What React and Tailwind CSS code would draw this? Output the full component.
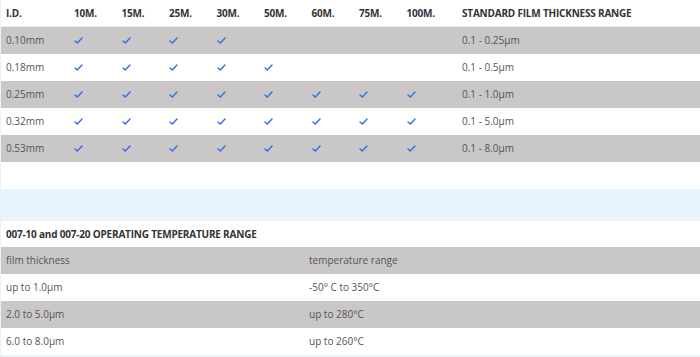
import React from 'react';

const lengths = ['10M.', '15M.', '25M.', '30M.', '50M.', '60M.', '75M.', '100M.'];

const rows = [
  { id: '0.10mm', count: 4, range: '0.1 - 0.25μm' },
  { id: '0.18mm', count: 5, range: '0.1 - 0.5μm' },
  { id: '0.25mm', count: 8, range: '0.1 - 1.0μm' },
  { id: '0.32mm', count: 8, range: '0.1 - 5.0μm' },
  { id: '0.53mm', count: 8, range: '0.1 - 8.0μm' },
];

const temps = [
  ['up to 1.0μm', '-50° C to 350°C'],
  ['2.0 to 5.0μm', 'up to 280°C'],
  ['6.0 to 8.0μm', 'up to 260°C'],
];

const Check = () => (
  <svg width="9" height="7" viewBox="0 0 9 7" className="block">
    <path d="M1 4 L3.3 6 L8 1" fill="none" stroke="#2f6fe8" strokeWidth="1.4" strokeLinecap="round" strokeLinejoin="round" />
  </svg>
);

const App = () => {
  return (
    <div className="w-[700px] h-[357px] overflow-hidden bg-[#e8f4fd] pl-px text-[10px] text-[#555] font-['Open_Sans',sans-serif]">
      {/* Film thickness table */}
      <div className="bg-white">
        <div className="flex h-[27px] items-center border-b border-[#ececec] font-bold tracking-[-0.02em] text-[#333]">
          <div className="w-[68px] pl-[5px]">I.D.</div>
          {lengths.map((l) => (
            <div key={l} className="w-[47.5px] pl-[5px]">{l}</div>
          ))}
          <div className="flex-1 pl-[13px]">STANDARD FILM THICKNESS RANGE</div>
        </div>
        {rows.map((r, i) => (
          <div
            key={r.id}
            className={`flex h-[27px] items-center ${i % 2 === 0 ? 'bg-[#c9c7c8]' : 'bg-white'}`}
          >
            <div className="w-[68px] pl-[5px]">{r.id}</div>
            {lengths.map((l, j) => (
              <div key={l} className="w-[47.5px] pl-[5px]">
                {j < r.count ? <Check /> : null}
              </div>
            ))}
            <div className="flex-1 pl-[13px]">{r.range}</div>
          </div>
        ))}
        <div className="h-[27px]" />
      </div>

      <div className="h-[32px]" />

      {/* Operating temperature table */}
      <div className="bg-white">
        <div className="flex h-[26px] items-center pl-[5px] font-bold tracking-[-0.02em] text-[#333]">
          007-10 and 007-20 OPERATING TEMPERATURE RANGE
        </div>
        <div className="flex h-[27px] items-center bg-[#c9c7c8]">
          <div className="w-[303px] pl-[5px]">film thickness</div>
          <div className="flex-1 pl-[5px]">temperature range</div>
        </div>
        {temps.map(([a, b], i) => (
          <div
            key={a}
            className={`flex h-[27px] items-center ${i % 2 === 1 ? 'bg-[#c9c7c8]' : 'bg-white'}`}
          >
            <div className="w-[303px] pl-[5px]">{a}</div>
            <div className="flex-1 pl-[5px]">{b}</div>
          </div>
        ))}
      </div>
    </div>
  );
};

export default App;
